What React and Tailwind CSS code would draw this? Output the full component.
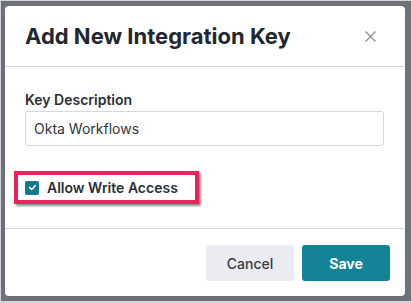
const App = () => {
  return (
    <div
      className="w-[412px] h-[303px] bg-[#cfd5da] p-[1px] pb-[2px]"
      style={{ fontFamily: "Inter, 'Liberation Sans', sans-serif" }}
    >
      <div className="w-full h-full bg-[#6f7176] pl-[4px] pr-[6px] pt-[5px] pb-[5px]">
        <div className="w-full h-full bg-white rounded-[4px] flex flex-col">
          {/* header */}
          <div className="h-[61px] flex items-center justify-between pl-[20px] pr-[29px] border-b border-[#d9d9e1]">
            <h2 className="text-[22px] font-bold text-[#23272f]">
              Add New Integration Key
            </h2>
            <button className="text-[#8a8d93]">
              <svg width="11" height="11" viewBox="0 0 11 11" fill="none" stroke="currentColor" strokeWidth="1.3">
                <path d="M0.5 0.5L10.5 10.5M10.5 0.5L0.5 10.5" />
              </svg>
            </button>
          </div>

          {/* body */}
          <div className="flex-1 px-[20px] pt-[24px]">
            <label className="block text-[14px] font-semibold text-[#2b2e35] leading-[18px] mb-[2px]">
              Key Description
            </label>
            <div className="h-[35px] w-[359px] border border-[#d6d8e0] rounded-[3px] flex items-center px-[8px] text-[14px] text-[#33363c]">
              Okta Workflows
            </div>

            <div className="mt-[25px] ml-[-11px] w-[185px] h-[33px] border-[4px] border-[#e8245b] shadow-[2px_2px_2px_rgba(0,0,0,0.45)] flex items-center pl-[7px] gap-[8px]">
              <div className="w-[14px] h-[14px] rounded-[2px] bg-[#13798f] flex items-center justify-center">
                <svg width="9" height="9" viewBox="0 0 10 10" fill="none" stroke="white" strokeWidth="1.8" strokeLinecap="round" strokeLinejoin="round">
                  <path d="M2 5.2L4.1 7.2L8 3" />
                </svg>
              </div>
              <span className="text-[14px] font-semibold text-[#2b2e35]">Allow Write Access</span>
            </div>
          </div>

          {/* footer */}
          <div className="h-[68px] border-t border-[#d9d9e1] flex items-center justify-end gap-[8px] pr-[15px] pt-[1px]">
            <button className="w-[88px] h-[36px] rounded-[3px] bg-[#ebecf1] text-[14px] font-medium text-[#3a3c42]">
              Cancel
            </button>
            <button className="w-[88px] h-[36px] rounded-[3px] bg-[#138497] text-[14px] font-bold text-white">
              Save
            </button>
          </div>
        </div>
      </div>
    </div>
  );
};

export default App;
